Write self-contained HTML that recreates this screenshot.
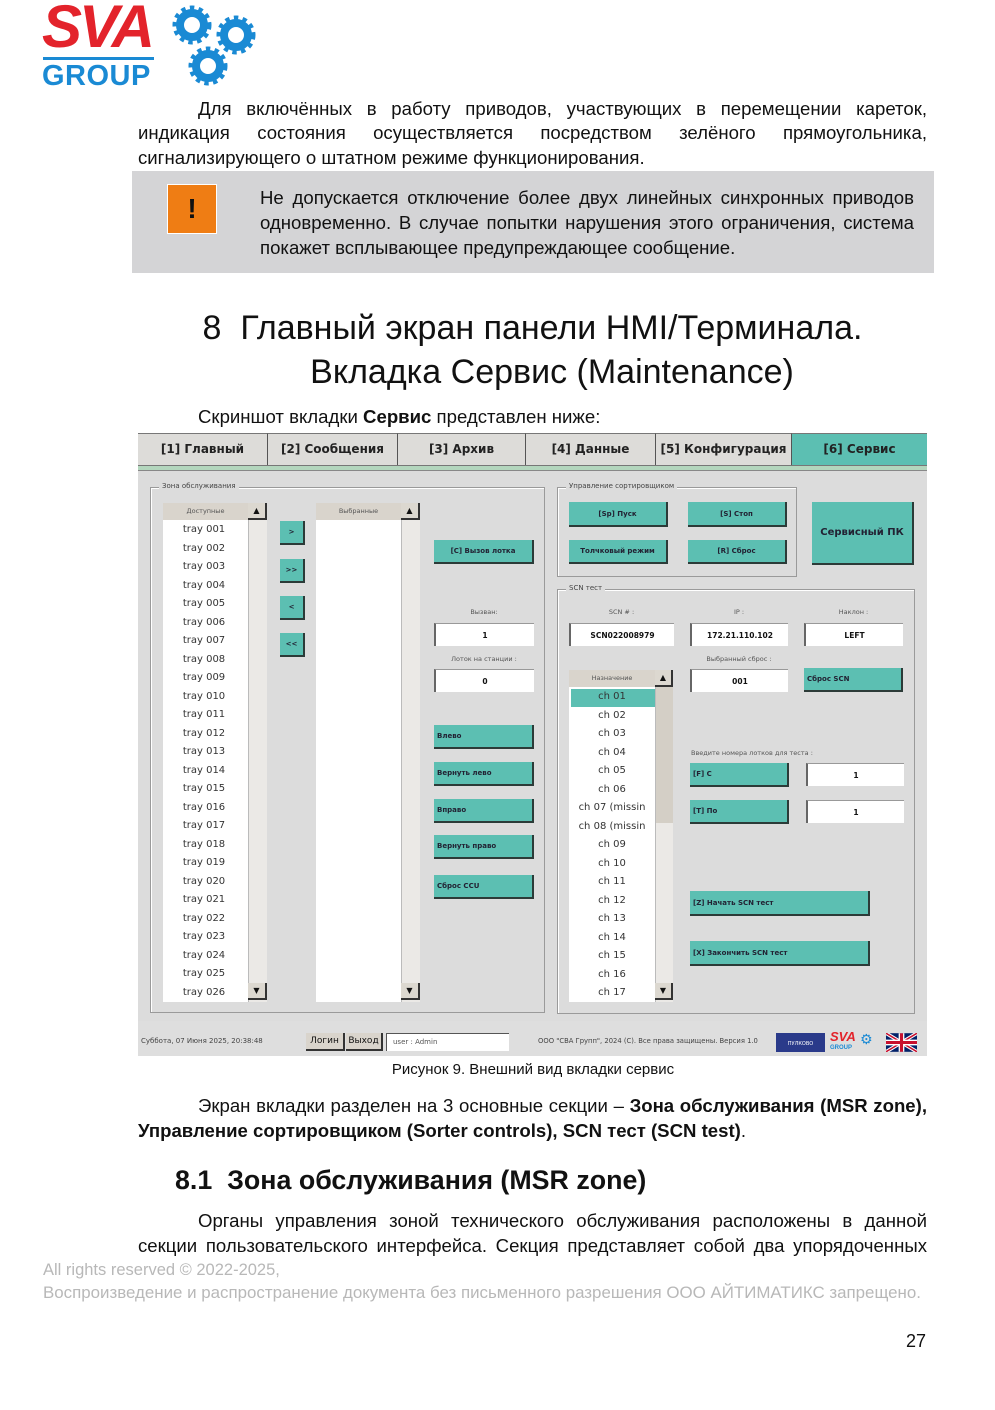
<!DOCTYPE html>
<html><head><meta charset="utf-8"><style>
*{margin:0;padding:0;box-sizing:border-box}
body{width:995px;height:1410px;background:#fff;position:relative;font-family:"Liberation Sans","DejaVu Sans",sans-serif;color:#111;overflow:hidden}
.a{position:absolute}
.p{position:absolute;font-size:18.6px;line-height:24.5px;white-space:nowrap}
.j{position:absolute;font-size:18.6px;line-height:24.5px;text-align:justify;text-align-last:justify;white-space:normal}
.scr{position:absolute;left:138px;top:433px;width:789px;height:623px;background:#dcdcdc;overflow:hidden;font-family:"DejaVu Sans","Liberation Sans",sans-serif}
.tab{position:absolute;top:0;height:32px;background:#dddcd9;border-right:1.5px solid #555;border-top:1px solid #777;font-weight:bold;font-size:12px;text-align:center;line-height:31px;color:#222}
.fs{position:absolute;border:1px solid #9a9a9a;box-shadow:inset 1px 1px 0 #fff}
.lg{position:absolute;top:-6px;left:8px;background:#dcdcdc;font-size:7px;color:#444;padding:0 3px}
.b{position:absolute;background:#5cbfb2;border-right:2px solid #2c3b38;border-bottom:2px solid #2c3b38;font-weight:bold;font-size:7px;color:#223;display:flex;align-items:center;justify-content:center}
.bl{justify-content:flex-start;padding-left:3px}
.in{position:absolute;background:#fff;border-left:2px solid #666;border-top:1px solid #999;font-weight:bold;font-size:7.5px;display:flex;align-items:center;justify-content:center}
.lb{position:absolute;font-size:6.5px;color:#555;text-align:center}
.list{position:absolute;background:#fff}
.hd{position:absolute;background:#d9d4cc;font-size:6.5px;color:#555;text-align:center;line-height:16px}
.sb{position:absolute;background:#ebe9e6;border-left:1px solid #bbb}
.ar{position:absolute;width:19px;height:17px;background:#dcd8d0;border-right:2px solid #333;border-bottom:2px solid #333;font-size:8px;text-align:center;line-height:15px}
.items div{height:18.52px;line-height:18.52px;font-size:10px;color:#333;text-align:center}
</style></head><body>

<div class="a" style="left:42px;top:-4px;font:italic 900 60px/62px 'Liberation Sans',sans-serif;color:#e3232b;letter-spacing:-3px;transform:scaleX(1.0);transform-origin:left">SVA</div>
<div class="a" style="left:43px;top:57px;width:111px;height:3px;background:#1a8ad4"></div>
<div class="a" style="left:42px;top:60px;font:bold 29px/32px 'Liberation Sans',sans-serif;color:#1a8ad4;letter-spacing:0.5px">GROUP</div>
<svg class="a" style="left:170px;top:3px" width="90" height="84" viewBox="0 0 90 84">
<g fill="none" stroke="#1a8ad4">
<circle cx="22" cy="22" r="12" stroke-width="8"/><circle cx="22" cy="22" r="16.5" stroke-width="6" stroke-dasharray="4.2 4.2"/>
<circle cx="66" cy="32" r="12" stroke-width="8"/><circle cx="66" cy="32" r="16.5" stroke-width="6" stroke-dasharray="4.2 4.2"/>
<circle cx="38" cy="63" r="12" stroke-width="8"/><circle cx="38" cy="63" r="16.5" stroke-width="6" stroke-dasharray="4.2 4.2"/>
</g></svg>

<div class="j" style="left:198px;top:97px;width:729px">Для включённых в работу приводов, участвующих в перемещении кареток,</div>
<div class="j" style="left:138px;top:121px;width:789px">индикация состояния осуществляется посредством зелёного прямоугольника,</div>
<div class="p" style="left:138px;top:146px">сигнализирующего о штатном режиме функционирования.</div>

<div class="a" style="left:132px;top:171px;width:802px;height:102px;background:#d4d4d6"></div>
<div class="a" style="left:167px;top:184px;width:50px;height:50px;background:#ef7d14;border:1px solid #fff;font:bold 28px/48px 'Liberation Sans',sans-serif;text-align:center;color:#111">!</div>
<div class="j" style="left:260px;top:186px;width:654px">Не допускается отключение более двух линейных синхронных приводов</div>
<div class="j" style="left:260px;top:211px;width:654px">одновременно. В случае попытки нарушения этого ограничения, система</div>
<div class="p" style="left:260px;top:236px">покажет всплывающее предупреждающее сообщение.</div>

<div class="a" style="left:0;top:306px;width:1065px;text-align:center;font-size:34px;line-height:44px">8&nbsp; Главный экран панели HMI/Терминала.</div>
<div class="a" style="left:0;top:350px;width:1104px;text-align:center;font-size:34px;line-height:44px">Вкладка Сервис (Maintenance)</div>

<div class="p" style="left:198px;top:405px;line-height:24px">Скриншот вкладки <b>Сервис</b> представлен ниже:</div>

<div class="scr">
<div class="tab" style="left:0;width:130px">[1] Главный</div>
<div class="tab" style="left:130px;width:130px">[2] Сообщения</div>
<div class="tab" style="left:260px;width:128px">[3] Архив</div>
<div class="tab" style="left:388px;width:130px">[4] Данные</div>
<div class="tab" style="left:518px;width:136px">[5] Конфигурация</div>
<div class="tab" style="left:654px;width:135px;background:#5cbfb2;border-right:none">[6] Сервис</div>
<div class="a" style="left:0;top:32px;width:789px;height:6px;background:#b3d6bd;border-top:1px solid #777;border-bottom:1px solid #888"></div>

<div class="fs" style="left:12px;top:54px;width:395px;height:526px"><span class="lg">Зона обслуживания</span></div>
<div class="list" style="left:25px;top:70px;width:104px;height:499px"></div>
<div class="hd" style="left:25px;top:70px;width:85px;height:17px">Доступные</div>
<div class="sb" style="left:110px;top:70px;width:19px;height:499px"></div>
<div class="ar" style="left:110px;top:70px">▲</div>
<div class="ar" style="left:110px;top:550px">▼</div>
<div class="items a" style="left:25px;top:88px;width:82px">
<div>tray 001</div><div>tray 002</div><div>tray 003</div><div>tray 004</div><div>tray 005</div><div>tray 006</div><div>tray 007</div><div>tray 008</div><div>tray 009</div><div>tray 010</div><div>tray 011</div><div>tray 012</div><div>tray 013</div><div>tray 014</div><div>tray 015</div><div>tray 016</div><div>tray 017</div><div>tray 018</div><div>tray 019</div><div>tray 020</div><div>tray 021</div><div>tray 022</div><div>tray 023</div><div>tray 024</div><div>tray 025</div><div>tray 026</div>
</div>
<div class="b" style="left:142px;top:88px;width:25px;height:24px">&gt;</div>
<div class="b" style="left:142px;top:126px;width:25px;height:24px">&gt;&gt;</div>
<div class="b" style="left:142px;top:163px;width:25px;height:24px">&lt;</div>
<div class="b" style="left:142px;top:200px;width:25px;height:24px">&lt;&lt;</div>

<div class="list" style="left:178px;top:70px;width:104px;height:499px"></div>
<div class="hd" style="left:178px;top:70px;width:85px;height:17px">Выбранные</div>
<div class="sb" style="left:263px;top:70px;width:19px;height:499px"></div>
<div class="ar" style="left:263px;top:70px">▲</div>
<div class="ar" style="left:263px;top:550px">▼</div>

<div class="b" style="left:296px;top:107px;width:100px;height:24px">[C] Вызов лотка</div>
<div class="lb" style="left:296px;top:175px;width:100px">Вызван:</div>
<div class="in" style="left:296px;top:190px;width:100px;height:23px">1</div>
<div class="lb" style="left:296px;top:222px;width:100px">Лоток на станции :</div>
<div class="in" style="left:296px;top:236px;width:100px;height:23px">0</div>
<div class="b bl" style="left:296px;top:292px;width:100px;height:24px">Влево</div>
<div class="b bl" style="left:296px;top:329px;width:100px;height:24px">Вернуть лево</div>
<div class="b bl" style="left:296px;top:366px;width:100px;height:24px">Вправо</div>
<div class="b bl" style="left:296px;top:402px;width:100px;height:24px">Вернуть право</div>
<div class="b bl" style="left:296px;top:442px;width:100px;height:24px">Сброс CCU</div>

<div class="fs" style="left:419px;top:54px;width:240px;height:90px"><span class="lg">Управление сортировщиком</span></div>
<div class="b" style="left:431px;top:69px;width:99px;height:25px">[Sp] Пуск</div>
<div class="b" style="left:550px;top:69px;width:99px;height:25px">[S] Стоп</div>
<div class="b" style="left:431px;top:107px;width:99px;height:24px">Толчковый режим</div>
<div class="b" style="left:550px;top:107px;width:99px;height:24px">[R] Сброс</div>
<div class="b" style="left:674px;top:69px;width:102px;height:63px;font-size:10px">Сервисный ПК</div>

<div class="fs" style="left:419px;top:156px;width:358px;height:425px"><span class="lg">SCN тест</span></div>
<div class="lb" style="left:431px;top:175px;width:105px">SCN # :</div>
<div class="lb" style="left:552px;top:175px;width:98px">IP :</div>
<div class="lb" style="left:666px;top:175px;width:99px">Наклон :</div>
<div class="in" style="left:431px;top:190px;width:105px;height:23px">SCN022008979</div>
<div class="in" style="left:552px;top:190px;width:98px;height:23px">172.21.110.102</div>
<div class="in" style="left:666px;top:190px;width:99px;height:23px">LEFT</div>
<div class="lb" style="left:552px;top:222px;width:98px">Выбранный сброс :</div>
<div class="in" style="left:552px;top:236px;width:98px;height:23px">001</div>
<div class="b bl" style="left:666px;top:235px;width:99px;height:24px">Сброс SCN</div>

<div class="list" style="left:431px;top:237px;width:104px;height:332px"></div>
<div class="hd" style="left:431px;top:237px;width:86px;height:17px">Назначение</div>
<div class="sb" style="left:517px;top:237px;width:18px;height:332px"></div>
<div class="a" style="left:518px;top:254px;width:17px;height:136px;background:#d4cfc6"></div>
<div class="ar" style="left:517px;top:237px;width:18px">▲</div>
<div class="ar" style="left:517px;top:550px;width:18px">▼</div>
<div class="a" style="left:433px;top:256px;width:84px;height:18px;background:#5cbfb2"></div>
<div class="items a" style="left:431px;top:255px;width:86px">
<div>ch 01</div><div>ch 02</div><div>ch 03</div><div>ch 04</div><div>ch 05</div><div>ch 06</div><div>ch 07 (missin</div><div>ch 08 (missin</div><div>ch 09</div><div>ch 10</div><div>ch 11</div><div>ch 12</div><div>ch 13</div><div>ch 14</div><div>ch 15</div><div>ch 16</div><div>ch 17</div>
</div>
<div class="lb" style="left:553px;top:316px;text-align:left">Введите номера лотков для теста :</div>
<div class="b bl" style="left:552px;top:330px;width:99px;height:24px">[F] С</div>
<div class="in" style="left:668px;top:330px;width:98px;height:23px">1</div>
<div class="b bl" style="left:552px;top:367px;width:99px;height:24px">[T] По</div>
<div class="in" style="left:668px;top:367px;width:98px;height:23px">1</div>
<div class="b bl" style="left:552px;top:458px;width:180px;height:25px">[Z] Начать SCN тест</div>
<div class="b bl" style="left:552px;top:508px;width:180px;height:25px">[X] Закончить SCN тест</div>

<div class="a" style="left:0;top:588px;width:789px;height:35px;background:#dedede"></div>
<div class="a" style="left:3px;top:604px;font-size:7px;color:#444">Суббота, 07 Июня 2025, 20:38:48</div>
<div class="a" style="left:168px;top:600px;width:39px;height:18px;background:#d9d4cc;border-right:2px solid #333;border-bottom:2px solid #333;font-size:9px;text-align:center;line-height:17px">Логин</div>
<div class="a" style="left:208px;top:600px;width:37px;height:18px;background:#d9d4cc;border-right:2px solid #333;border-bottom:2px solid #333;font-size:9px;text-align:center;line-height:17px">Выход</div>
<div class="a" style="left:248px;top:600px;width:123px;height:18px;background:#fff;border-top:1px solid #555;border-left:1px solid #555;font-size:7px;color:#555;line-height:17px;padding-left:6px">user : Admin</div>
<div class="a" style="left:400px;top:604px;font-size:6.8px;color:#444">ООО "СВА Групп", 2024 (С). Все права защищены. Версия 1.0</div>
<div class="a" style="left:638px;top:600px;width:49px;height:19px;background:#2a3a8a;color:#fff;font-size:5px;text-align:center;line-height:22px">ПУЛКОВО</div>
<div class="a" style="left:692px;top:597px;font:italic 900 13px/14px 'Liberation Sans',sans-serif;color:#e3232b">SVA</div>
<div class="a" style="left:692px;top:611px;font:bold 6px/8px 'Liberation Sans',sans-serif;color:#1a8ad4">GROUP</div>
<div class="a" style="left:722px;top:599px;font-size:14px;color:#1a8ad4;line-height:16px">⚙</div>
<svg class="a" style="left:748px;top:600px" width="31" height="19" viewBox="0 0 60 36"><rect width="60" height="36" fill="#012169"/><path d="M0 0L60 36M60 0L0 36" stroke="#fff" stroke-width="7"/><path d="M0 0L60 36M60 0L0 36" stroke="#c8102e" stroke-width="3"/><path d="M30 0V36M0 18H60" stroke="#fff" stroke-width="11"/><path d="M30 0V36M0 18H60" stroke="#c8102e" stroke-width="6"/></svg>
</div>

<div class="a" style="left:0;top:1060px;width:1066px;text-align:center;font-size:15px;line-height:20px">Рисунок 9. Внешний вид вкладки сервис</div>

<div class="j" style="left:198px;top:1094px;width:729px">Экран вкладки разделен на 3 основные секции – <b>Зона обслуживания (MSR zone),</b></div>
<div class="p" style="left:138px;top:1119px"><b>Управление сортировщиком (Sorter controls), SCN тест (SCN test)</b>.</div>

<div class="a" style="left:175px;top:1162px;font-size:26.8px;line-height:36px;font-weight:bold">8.1&nbsp; Зона обслуживания (MSR zone)</div>

<div class="j" style="left:198px;top:1209px;width:729px">Органы управления зоной технического обслуживания расположены в данной</div>
<div class="j" style="left:138px;top:1234px;width:789px">секции пользовательского интерфейса. Секция представляет собой два упорядоченных</div>

<div class="a" style="left:43px;top:1260px;font-size:16.5px;line-height:20px;color:#b8b8b8">All rights reserved © 2022-2025,</div>
<div class="a" style="left:43px;top:1283px;font-size:16.9px;line-height:20px;color:#b8b8b8;white-space:nowrap">Воспроизведение и распространение документа без письменного разрешения ООО АЙТИМАТИКС запрещено.</div>

<div class="a" style="left:906px;top:1330px;font-size:18px;line-height:22px">27</div>
</body></html>
